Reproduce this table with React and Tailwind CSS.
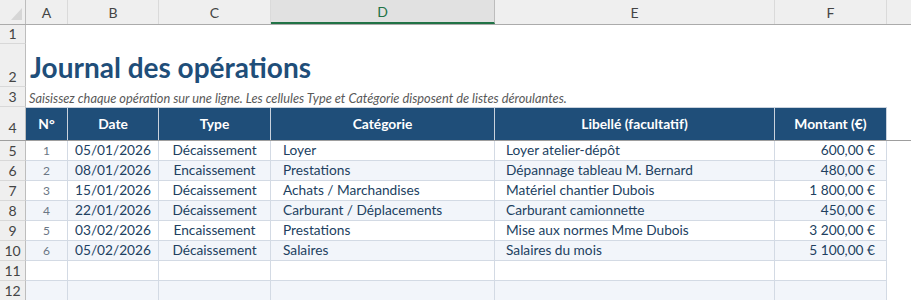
import React from "react";

const FONT = { fontFamily: "Lato, 'Open Sans', sans-serif" };

const cols = ["A", "B", "C", "D", "E", "F"];
const colW = ["w-[42px]", "w-[91px]", "w-[112px]", "w-[224px]", "w-[280px]", "w-[112px]"];

const rows = [
  ["1", "05/01/2026", "Décaissement", "Loyer", "Loyer atelier-dépôt", "600,00 €"],
  ["2", "08/01/2026", "Encaissement", "Prestations", "Dépannage tableau M. Bernard", "480,00 €"],
  ["3", "15/01/2026", "Décaissement", "Achats / Marchandises", "Matériel chantier Dubois", "1 800,00 €"],
  ["4", "22/01/2026", "Décaissement", "Carburant / Déplacements", "Carburant camionnette", "450,00 €"],
  ["5", "03/02/2026", "Encaissement", "Prestations", "Mise aux normes Mme Dubois", "3 200,00 €"],
  ["6", "05/02/2026", "Décaissement", "Salaires", "Salaires du mois", "5 100,00 €"],
  ["", "", "", "", "", ""],
  ["", "", "", "", "", ""],
];

function RowNum({ n, h, extra = "" }) {
  return (
    <div
      className={`w-[26px] shrink-0 ${h} bg-[#efefef] border-r border-[#bdbdbd] border-b border-b-[#d8d8d8] flex items-end justify-center text-[14px] leading-[18px] text-[#444] ${extra}`}
    >
      {n}
    </div>
  );
}

export default function App() {
  return (
    <div className="w-[911px] h-[300px] overflow-hidden bg-white" style={FONT}>
      {/* column letters */}
      <div className="flex h-[25px] bg-[#efefef] border-b border-[#ababab]">
        <div className="w-[26px] shrink-0 border-r border-[#bdbdbd] relative">
          <svg className="absolute left-[11px] top-[8px]" width="11" height="12" viewBox="0 0 11 12">
            <polygon points="11,0 11,12 0,12" fill="#d6d6d6" />
          </svg>
        </div>
        {cols.map((c, i) =>
          c === "D" ? (
            <div
              key={c}
              className={`${colW[i]} shrink-0 bg-[#e1e1e1] border-r border-[#bcbcbc] border-b-2 border-b-[#217346] flex items-center justify-center text-[14px] text-[#217346]`}
            >
              {c}
            </div>
          ) : (
            <div
              key={c}
              className={`${colW[i]} shrink-0 border-r border-[#dadada] flex items-center justify-center text-[14px] text-[#444]`}
            >
              {c}
            </div>
          )
        )}
      </div>

      {/* row 1 */}
      <div className="flex h-[19px]">
        <RowNum n="1" h="h-[19px]" />
      </div>

      {/* row 2 - title */}
      <div className="flex h-[43px]">
        <RowNum n="2" h="h-[43px]" />
        <div className="flex items-end pl-[4px] pb-[4px] whitespace-nowrap text-[28px] leading-[32px] font-bold text-[#1f4e79]">
          Journal des opérations
        </div>
      </div>

      {/* row 3 - hint */}
      <div className="flex h-[20px]">
        <RowNum n="3" h="h-[20px]" />
        <div className="flex items-end pl-[3px] pb-[1px] whitespace-nowrap text-[12.8px] leading-[16px] italic text-[#595959]">
          Saisissez chaque opération sur une ligne. Les cellules Type et Catégorie disposent de listes déroulantes.
        </div>
      </div>

      {/* row 4 - table header */}
      <div className="flex h-[34px] border-b border-[#9e9e9e]">
        <RowNum n="4" h="h-[33px]" extra="border-b-0 pb-[3px]" />
        {["N°", "Date", "Type", "Catégorie", "Libellé (facultatif)", "Montant (€)"].map((t, i) => (
          <div
            key={t}
            className={`${colW[i]} shrink-0 bg-[#1f4e79] border-r border-t border-[#c9d2dd] flex items-center justify-center text-[13.8px] font-bold text-white`}
          >
            {t}
          </div>
        ))}
      </div>

      {/* data rows */}
      {rows.map((r, idx) => (
        <div key={idx} className="flex h-[20px]">
          <RowNum n={String(idx + 5)} h="h-[20px]" extra="leading-[19px] items-center" />
          <div
            className={`flex text-[13.7px] text-[#213f5f] ${idx % 2 === 1 ? "bg-[#f2f5fa]" : "bg-white"}`}
          >
            <div className={`${colW[0]} shrink-0 border-r border-b border-[#d3dae4] flex items-center justify-center text-[12px] text-[#6b7684]`}>
              {r[0]}
            </div>
            <div className={`${colW[1]} shrink-0 border-r border-b border-[#d3dae4] flex items-center justify-center`}>
              {r[1]}
            </div>
            <div className={`${colW[2]} shrink-0 border-r border-b border-[#d3dae4] flex items-center justify-center`}>
              {r[2]}
            </div>
            <div className={`${colW[3]} shrink-0 border-r border-b border-[#d3dae4] flex items-center pl-[12px]`}>
              {r[3]}
            </div>
            <div className={`${colW[4]} shrink-0 border-r border-b border-[#d3dae4] flex items-center pl-[11px]`}>
              {r[4]}
            </div>
            <div className={`${colW[5]} shrink-0 border-r border-b border-[#d3dae4] flex items-center justify-end pr-[11px]`}>
              {r[5]}
            </div>
          </div>
        </div>
      ))}
    </div>
  );
}
